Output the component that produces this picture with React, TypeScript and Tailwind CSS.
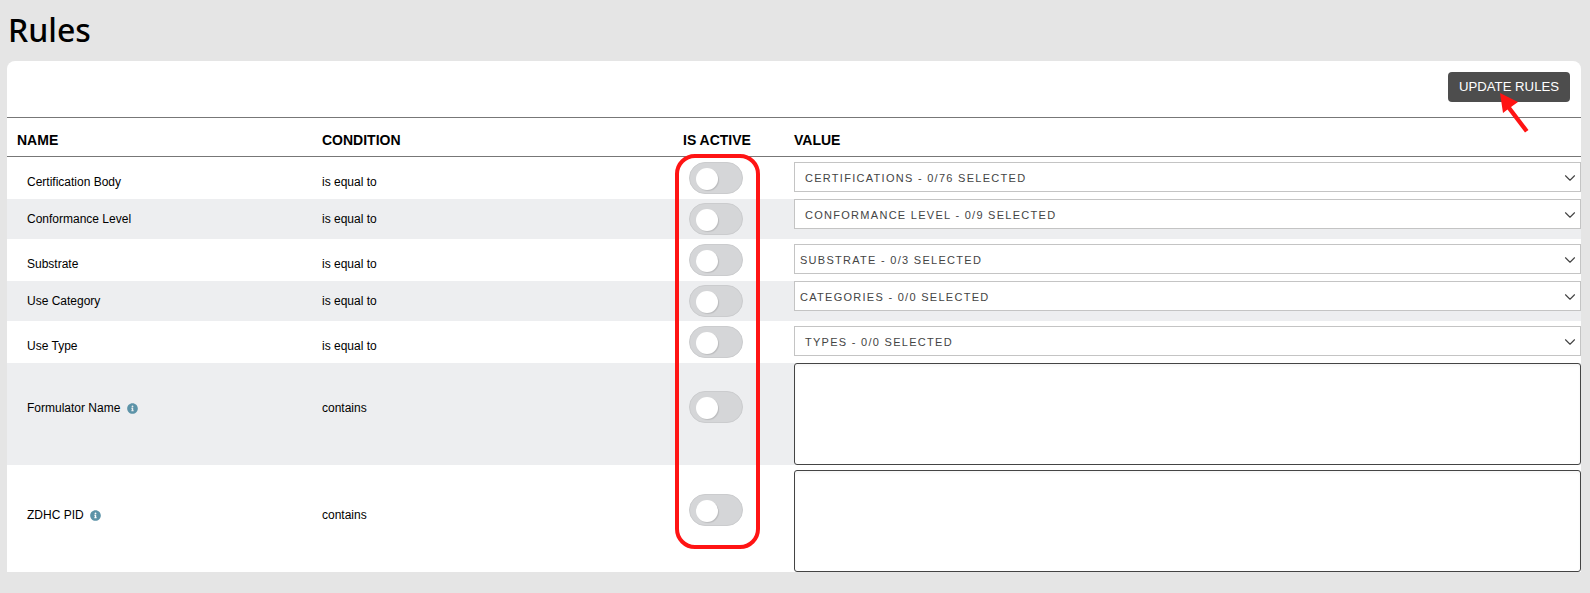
import React from 'react';
import { ChevronDown } from 'lucide-react';
import { FaInfoCircle } from 'react-icons/fa';

const rowGrid = 'grid grid-cols-[315px_361px_111px_787px]';

const Toggle = ({ className }: { className: string }) => (
  <div className={`relative h-[32px] w-[54px] rounded-full border border-[#cbccce] bg-[#d5d6d8] ${className}`}>
    <div className="absolute left-[6px] top-[5px] h-[22px] w-[22px] rounded-full bg-white shadow-[1px_1px_1px_rgba(0,0,0,0.12)]"></div>
  </div>
);

const Select = ({ label, className }: { label: string; className: string }) => (
  <div className={`flex h-[30px] w-[787px] items-center justify-between border border-[#c4c4c4] bg-white pr-[1px] text-[11px] tracking-[1.28px] text-[#444444] ${className}`}>
    <span className="pt-[2px]">{label}</span>
    <ChevronDown className="mt-[2px] h-[18px] w-[18px] text-[#444444]" strokeWidth={1.5} />
  </div>
);

const TextBox = ({ className }: { className: string }) => (
  <textarea className={`block h-[102px] w-[787px] resize-none rounded-[3px] border border-[#444444] bg-white shadow-[inset_0_2px_3px_rgba(0,0,0,0.04)] ${className}`} />
);

const Info = ({ className }: { className: string }) => <FaInfoCircle className={`h-[11px] w-[11px] text-[#5c93a8] ${className}`} />;

export default function App() {
  return (
    <div className="relative h-[593px] w-[1590px] overflow-hidden bg-[#e5e5e5] font-['Liberation_Sans',Arial,sans-serif] text-black">
      <h1 className="h-[61px] pl-[8px] pt-[8px] font-['Noto_Sans',sans-serif] text-[32px] font-medium leading-[44px]">Rules</h1>

      <div className="ml-[7px] w-[1574px] rounded-t-[8px] bg-white">
        <div className="flex h-[57px] items-start justify-end border-b border-[#777777] pr-[11px] pt-[11px]">
          <button className="h-[30px] w-[122px] rounded-[4px] bg-[#4d4d4d] text-[13.2px] text-white">UPDATE RULES</button>
        </div>

        <div className={`${rowGrid} h-[39px] items-center border-b border-[#777777] pt-[6px] text-[14px] font-bold`}>
          <div className="pl-[10px]">NAME</div>
          <div>CONDITION</div>
          <div>IS ACTIVE</div>
          <div>VALUE</div>
        </div>

        <div className={`${rowGrid} h-[42px] text-[12px]`}>
          <div className="pl-[20px] pt-[16px]">Certification Body</div>
          <div className="pt-[16px]">is equal to</div>
          <div className="pt-[5px]"><Toggle className="ml-[6px]" /></div>
          <div className="pt-[5px]"><Select label="CERTIFICATIONS - 0/76 SELECTED" className="pl-[10px]" /></div>
        </div>

        <div className={`${rowGrid} h-[40px] bg-[#edeef0] text-[12px]`}>
          <div className="pl-[20px] pt-[11px]">Conformance Level</div>
          <div className="pt-[11px]">is equal to</div>
          <div className="pt-[4px]"><Toggle className="ml-[6px]" /></div>
          <div><Select label="CONFORMANCE LEVEL - 0/9 SELECTED" className="pl-[10px]" /></div>
        </div>

        <div className={`${rowGrid} h-[42px] text-[12px]`}>
          <div className="pl-[20px] pt-[16px]">Substrate</div>
          <div className="pt-[16px]">is equal to</div>
          <div className="pt-[5px]"><Toggle className="ml-[6px]" /></div>
          <div className="pt-[5px]"><Select label="SUBSTRATE - 0/3 SELECTED" className="pl-[5px]" /></div>
        </div>

        <div className={`${rowGrid} h-[40px] bg-[#edeef0] text-[12px]`}>
          <div className="pl-[20px] pt-[11px]">Use Category</div>
          <div className="pt-[11px]">is equal to</div>
          <div className="pt-[4px]"><Toggle className="ml-[6px]" /></div>
          <div><Select label="CATEGORIES - 0/0 SELECTED" className="pl-[5px]" /></div>
        </div>

        <div className={`${rowGrid} h-[42px] text-[12px]`}>
          <div className="pl-[20px] pt-[16px]">Use Type</div>
          <div className="pt-[16px]">is equal to</div>
          <div className="pt-[5px]"><Toggle className="ml-[6px]" /></div>
          <div className="pt-[5px]"><Select label="TYPES - 0/0 SELECTED" className="pl-[10px]" /></div>
        </div>

        <div className={`${rowGrid} h-[102px] bg-[#edeef0] text-[12px]`}>
          <div className="flex items-center self-start pl-[20px] pt-[36px]">Formulator Name<Info className="ml-[7px]" /></div>
          <div className="pt-[36px]">contains</div>
          <div className="pt-[28px]"><Toggle className="ml-[6px]" /></div>
          <div><TextBox className="" /></div>
        </div>

        <div className={`${rowGrid} h-[107px] text-[12px]`}>
          <div className="flex items-center self-start pl-[20px] pt-[41px]">ZDHC PID<Info className="ml-[6px]" /></div>
          <div className="pt-[41px]">contains</div>
          <div className="pt-[29px]"><Toggle className="ml-[6px]" /></div>
          <div className="pt-[5px]"><TextBox className="" /></div>
        </div>
      </div>

      {/* annotations drawn on top of the screenshot */}
      <div className="absolute left-[675px] top-[154px] h-[395px] w-[85px] rounded-[20px] border-[4px] border-[#ff1414]"></div>
      <svg className="absolute left-[1490px] top-[85px]" width="50" height="55" viewBox="0 0 50 55">
        <path d="M10 8 L28 17 L21 22 L38.5 45 L35 47.5 L17.5 24.5 L13 28 Z" fill="#ff1414" />
      </svg>
    </div>
  );
}
